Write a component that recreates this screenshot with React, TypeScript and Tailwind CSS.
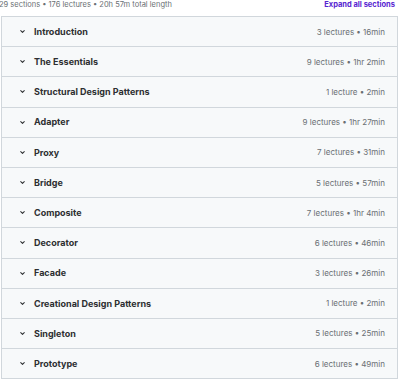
const sections = [
  { title: "Introduction", meta: "3 lectures • 16min" },
  { title: "The Essentials", meta: "9 lectures • 1hr 2min" },
  { title: "Structural Design Patterns", meta: "1 lecture • 2min" },
  { title: "Adapter", meta: "9 lectures • 1hr 27min" },
  { title: "Proxy", meta: "7 lectures • 31min" },
  { title: "Bridge", meta: "5 lectures • 57min" },
  { title: "Composite", meta: "7 lectures • 1hr 4min" },
  { title: "Decorator", meta: "6 lectures • 46min" },
  { title: "Facade", meta: "3 lectures • 26min" },
  { title: "Creational Design Patterns", meta: "1 lecture • 2min" },
  { title: "Singleton", meta: "5 lectures • 25min" },
  { title: "Prototype", meta: "6 lectures • 49min" },
];

function Chevron() {
  return (
    <svg width="7" height="7" viewBox="0 0 24 24" fill="none" stroke="#2d2f31" strokeWidth={3.5} strokeLinecap="round" strokeLinejoin="round">
      <path d="M6 9l6 6 6-6" />
    </svg>
  );
}

export default function App() {
  return (
    <div className="w-[400px] h-[380px] bg-white overflow-hidden" style={{ fontFamily: "Inter, 'Noto Sans', sans-serif" }}>
      {/* Header */}
      <div className="flex items-center justify-between h-[12px] mt-[-1px] mb-[5px] pr-[5px]">
        <span className="text-[7.5px] text-[#6a6f73] -ml-[1px]">29 sections • 176 lectures • 20h 57m total length</span>
        <span className="text-[7.5px] font-bold text-[#5624d0]">Expand all sections</span>
      </div>

      {/* Sections */}
      <div className="ml-[1px] mr-[2px] border-x border-t border-[#d1d7dc]">
        {sections.map((s, i) => (
          <div
            key={i}
            className="flex items-center justify-between h-[30.2px] border-b border-[#d1d7dc] bg-[#f7f9fa] pl-[17px] pr-[12px]"
          >
            <div className="flex items-center gap-[8px]">
              <Chevron />
              <span className="text-[9px] font-bold text-[#2d2f31]">{s.title}</span>
            </div>
            <span className="text-[8px] text-[#6a6f73]">{s.meta}</span>
          </div>
        ))}
      </div>
    </div>
  );
}
